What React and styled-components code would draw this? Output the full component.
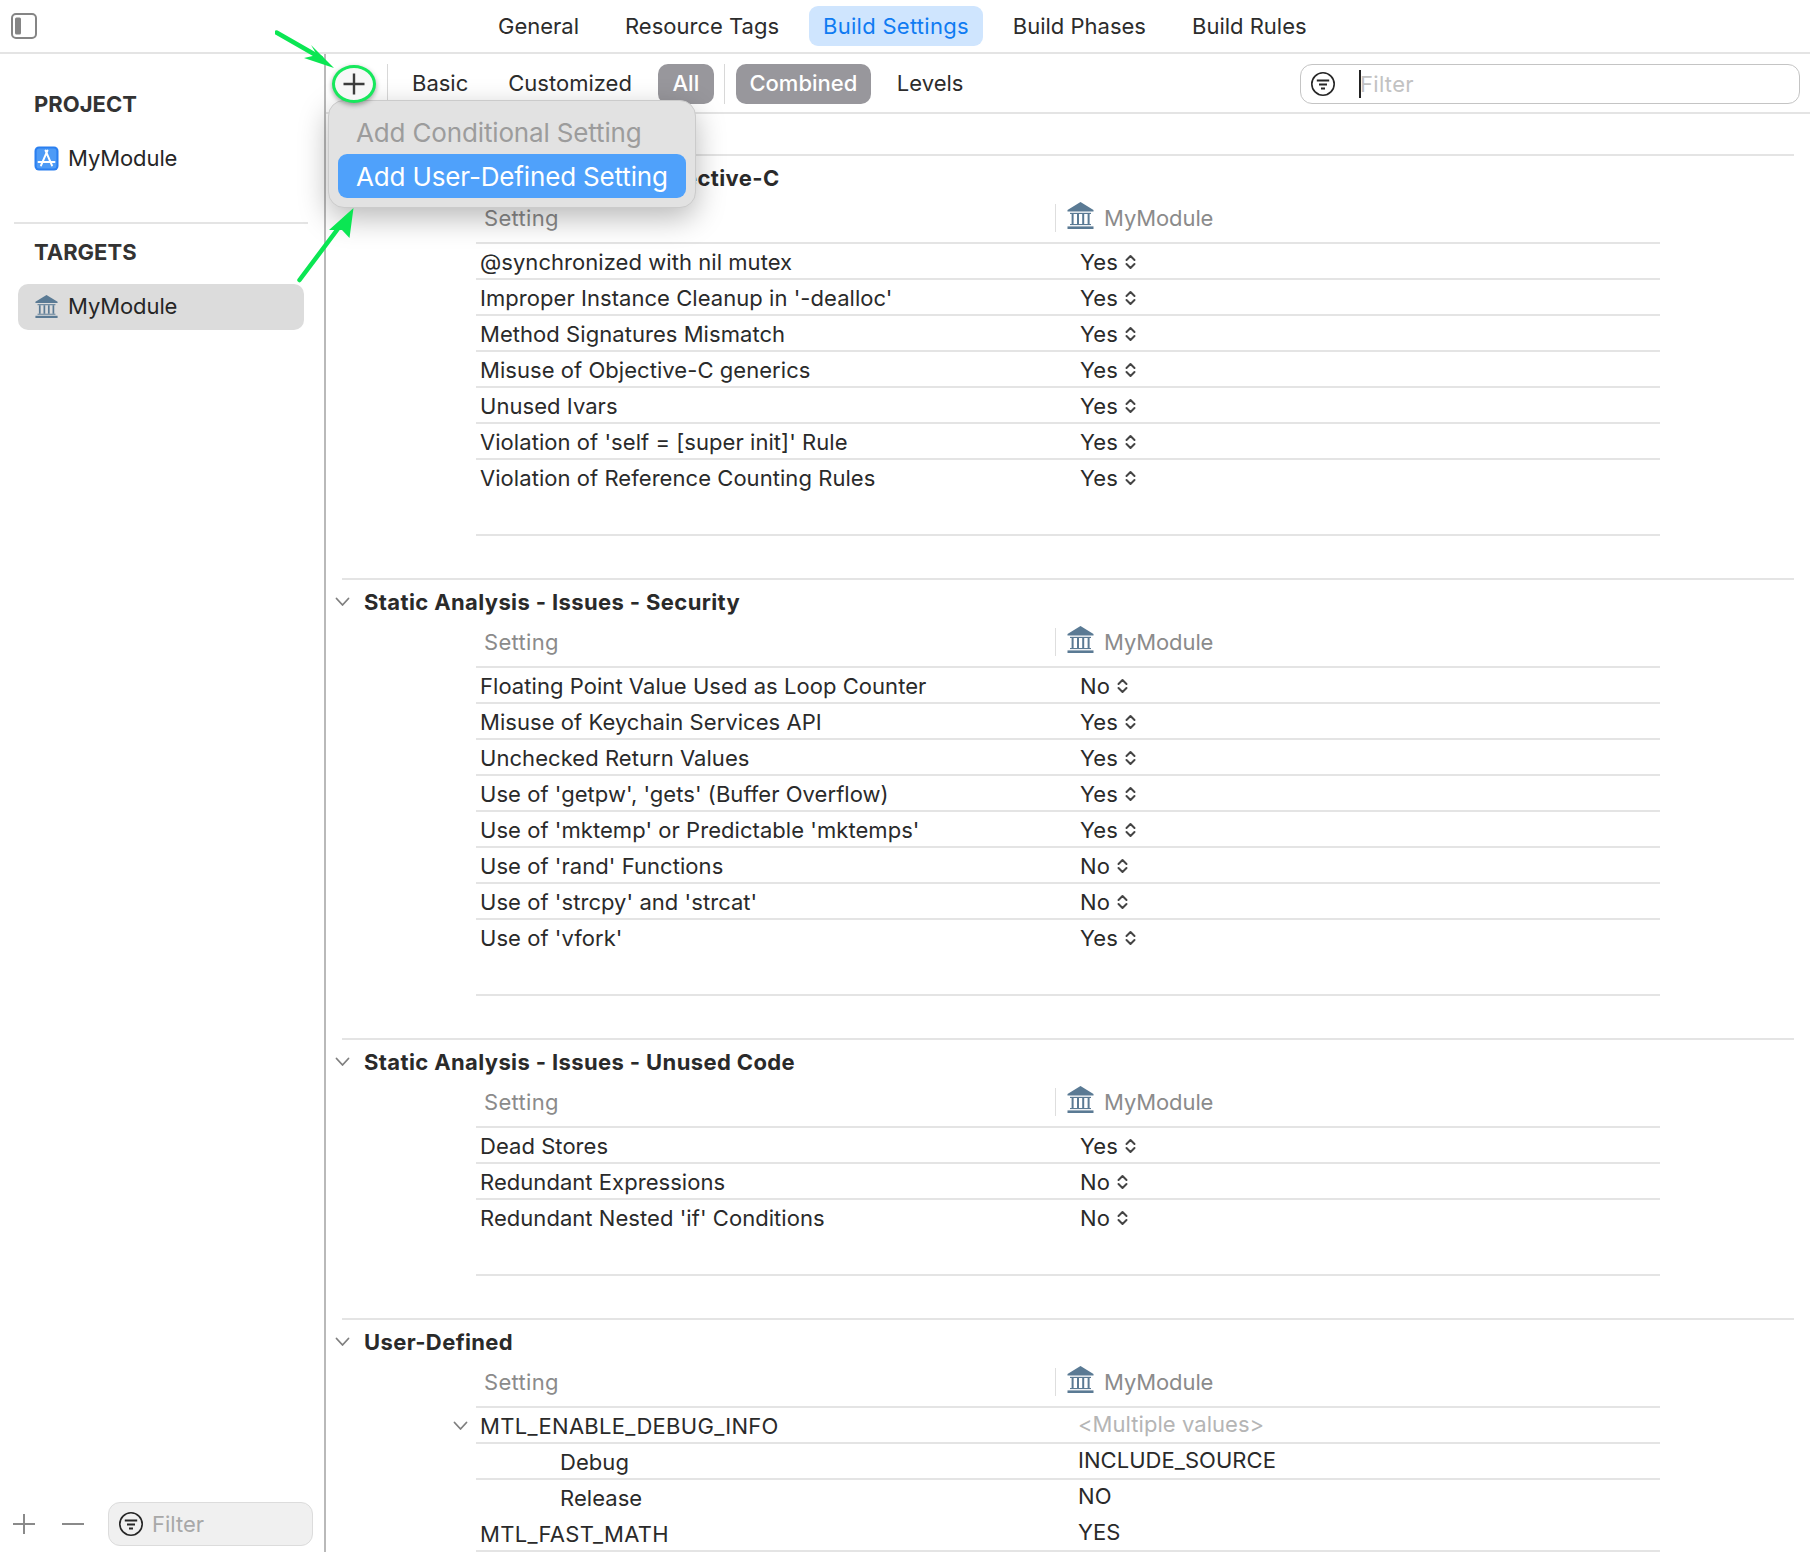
import React from 'react'
import styled, { createGlobalStyle } from 'styled-components'

const GlobalStyle = createGlobalStyle`
  html, body {
    margin: 0;
    background: #fff;
  }
  body {
    font-family: "Inter", "Liberation Sans", sans-serif;
    color: #262626;
  }
`

const sections = [
  {
    title: 'Static Analysis - Issues - Objective-C',
    rows: [
      ['@synchronized with nil mutex', 'Yes'],
      ["Improper Instance Cleanup in '-dealloc'", 'Yes'],
      ['Method Signatures Mismatch', 'Yes'],
      ['Misuse of Objective-C generics', 'Yes'],
      ['Unused Ivars', 'Yes'],
      ["Violation of 'self = [super init]' Rule", 'Yes'],
      ['Violation of Reference Counting Rules', 'Yes'],
    ],
  },
  {
    title: 'Static Analysis - Issues - Security',
    rows: [
      ['Floating Point Value Used as Loop Counter', 'No'],
      ['Misuse of Keychain Services API', 'Yes'],
      ['Unchecked Return Values', 'Yes'],
      ["Use of 'getpw', 'gets' (Buffer Overflow)", 'Yes'],
      ["Use of 'mktemp' or Predictable 'mktemps'", 'Yes'],
      ["Use of 'rand' Functions", 'No'],
      ["Use of 'strcpy' and 'strcat'", 'No'],
      ["Use of 'vfork'", 'Yes'],
    ],
  },
  {
    title: 'Static Analysis - Issues - Unused Code',
    rows: [
      ['Dead Stores', 'Yes'],
      ['Redundant Expressions', 'No'],
      ["Redundant Nested 'if' Conditions", 'No'],
    ],
  },
]

function BankIcon({ size = 27 }) {
  return (
    <svg width={size} height={size} viewBox="0 0 27 27" fill="#5a7a94">
      <path d="M13.5 0 L26.5 8 L26.5 9.5 L0.5 9.5 L0.5 8 Z" />
      <rect x="3" y="10.8" width="21" height="1.2" />
      <rect x="4.6" y="12" width="2" height="10" />
      <rect x="10" y="12" width="2" height="10" />
      <rect x="15.2" y="12" width="2" height="10" />
      <rect x="20.6" y="12" width="2" height="10" />
      <rect x="3" y="22" width="21" height="1.1" />
      <rect x="0.5" y="24.4" width="26" height="2.6" />
    </svg>
  )
}

function AppIcon() {
  return (
    <svg width="25" height="25" viewBox="0 0 25 25">
      <rect x="0.5" y="0.5" width="24" height="24" rx="4.5" fill="#2a7ff0" />
      <rect x="2.6" y="2.6" width="19.8" height="19.8" rx="2.5" fill="#4e9bf6" />
      <path d="M13.5 4.5 L7 19.5 M11.5 4.5 L18 19.5 M4.5 16h16" stroke="#fff" strokeWidth="1.9" fill="none" strokeLinecap="round" />
    </svg>
  )
}

function FilterIcon({ size = 26 }) {
  return (
    <svg width={size} height={size} viewBox="0 0 26 26" fill="none" stroke="#262626">
      <circle cx="13" cy="13" r="11.2" strokeWidth="1.6" />
      <path d="M6.8 9.5h12.4M9 13.5h8M11 17.5h4" strokeWidth="2" />
    </svg>
  )
}

function Stepper() {
  return (
    <svg width="11" height="16" viewBox="0 0 11 16" fill="none" stroke="#444" strokeWidth="2" strokeLinecap="round" strokeLinejoin="round">
      <path d="M1.5 6 L5.5 2 L9.5 6" />
      <path d="M1.5 10 L5.5 14 L9.5 10" />
    </svg>
  )
}

function Chevron() {
  return (
    <svg width="15" height="10" viewBox="0 0 15 10" fill="none" stroke="#7f7f7f" strokeWidth="1.8" strokeLinecap="round" strokeLinejoin="round">
      <path d="M1.5 1.5 L7.5 8 L13.5 1.5" />
    </svg>
  )
}

function SectionBlock({ title, children }) {
  return (
    <Section>
      <SectionTitle>
        <ChevronSlot><Chevron /></ChevronSlot>
        <span>{title}</span>
      </SectionTitle>
      <HeaderRow>
        <SettingCol>Setting</SettingCol>
        <TargetCol>
          <HeaderIcon><BankIcon /></HeaderIcon>
          <span>MyModule</span>
        </TargetCol>
      </HeaderRow>
      {children}
    </Section>
  )
}

export default function App() {
  return (
    <Page>
      <GlobalStyle />
      <TopBar>
        <SidebarToggle>
          <svg width="26" height="26" viewBox="0 0 26 26">
            <rect x="1" y="1" width="24" height="24" rx="4" fill="#fff" stroke="#858585" strokeWidth="2" />
            <rect x="4" y="4.5" width="6" height="17" rx="1.5" fill="#858585" />
          </svg>
        </SidebarToggle>
        <Tabs>
          <Tab>General</Tab>
          <Tab>Resource Tags</Tab>
          <Tab $active>Build Settings</Tab>
          <Tab>Build Phases</Tab>
          <Tab>Build Rules</Tab>
        </Tabs>
      </TopBar>

      <Body>
        <Sidebar>
          <SideGroup>
            <SideHeading $pt={37}>PROJECT</SideHeading>
            <SideItem>
              <IconSlot><AppIcon /></IconSlot>
              <span>MyModule</span>
            </SideItem>
          </SideGroup>
          <SideRule />
          <SideHeading $pt={15}>TARGETS</SideHeading>
          <SideItem $selected>
            <IconSlot><BankIcon size={23} /></IconSlot>
            <span>MyModule</span>
          </SideItem>
          <SideFooter>
            <FootButton>
              <svg width="24" height="24" viewBox="0 0 24 24" stroke="#8a8a8a" strokeWidth="2">
                <path d="M12 2v20M1 12h22" />
              </svg>
            </FootButton>
            <FootButton>
              <svg width="24" height="24" viewBox="0 0 24 24" stroke="#8a8a8a" strokeWidth="2">
                <path d="M1 12h22" />
              </svg>
            </FootButton>
            <SideFilter>
              <FilterIcon />
              <span>Filter</span>
            </SideFilter>
          </SideFooter>
        </Sidebar>

        <Main>
          <Toolbar>
            <AddButton>
              <svg width="24" height="24" viewBox="0 0 24 24" stroke="#3c3c3c" strokeWidth="2.4">
                <path d="M12 1.5v21M1.5 12h21" />
              </svg>
            </AddButton>
            <ToolDivider />
            <ToolItem $ml={24}>Basic</ToolItem>
            <ToolItem $ml={40}>Customized</ToolItem>
            <Pill $ml={26} $w={56}>All</Pill>
            <ToolDivider $ml={10} />
            <Pill $ml={11} $w={135}>Combined</Pill>
            <ToolItem $ml={26}>Levels</ToolItem>
            <SearchBox>
              <FilterIcon />
              <Caret />
              <span>Filter</span>
            </SearchBox>
          </Toolbar>

          <Scroller>
            {sections.map((s) => (
              <SectionBlock key={s.title} title={s.title}>
                {s.rows.map(([name, value]) => (
                  <Row key={name}>
                    <Name>{name}</Name>
                    <Value>
                      {value}
                      <Stepper />
                    </Value>
                  </Row>
                ))}
                <TableEnd />
              </SectionBlock>
            ))}
            <SectionBlock title="User-Defined">
              <Row>
                <NestChevron><Chevron /></NestChevron>
                <Name $caps>MTL_ENABLE_DEBUG_INFO</Name>
                <PlainValue $muted>&lt;Multiple values&gt;</PlainValue>
              </Row>
              <Row>
                <Name $indent>Debug</Name>
                <PlainValue>INCLUDE_SOURCE</PlainValue>
              </Row>
              <Row>
                <Name $indent>Release</Name>
                <PlainValue>NO</PlainValue>
              </Row>
              <Row>
                <Name $caps>MTL_FAST_MATH</Name>
                <PlainValue>YES</PlainValue>
              </Row>
            </SectionBlock>
          </Scroller>

          <Menu>
            <MenuItem $disabled>Add Conditional Setting</MenuItem>
            <MenuItem>Add User-Defined Setting</MenuItem>
          </Menu>
        </Main>
      </Body>

      <Arrows width="100" height="290" viewBox="0 0 100 290">
        <path d="M1.5 32.5 L46 58" stroke="#0be653" strokeWidth="4.5" strokeLinecap="round" />
        <path d="M59 68 L29 58 L42 55 L36 45 Z" fill="#0be653" />
        <path d="M24.5 280 L65 226" stroke="#0be653" strokeWidth="4.5" strokeLinecap="round" />
        <path d="M78.5 208 L74.5 238 L67 230 L54 230 Z" fill="#0be653" />
      </Arrows>
    </Page>
  )
}

const Page = styled.div`
  position: relative;
  width: 1810px;
  height: 1552px;
  overflow: hidden;
  background: #fff;
  display: flex;
  flex-direction: column;
`
const TopBar = styled.div`
  height: 52px;
  flex: none;
  display: flex;
  align-items: center;
  border-bottom: 2px solid #e4e4e4;
  padding-left: 11px;
`
const SidebarToggle = styled.div`
  width: 26px;
  height: 26px;
  display: flex;
`
const Tabs = styled.div`
  display: flex;
  align-items: center;
  margin-left: 461px;
`
const Tab = styled.div`
  height: 40px;
  box-sizing: border-box;
  padding-bottom: 1px;
  display: flex;
  align-items: center;
  font-size: 22px;
  letter-spacing: ${(p) => (p.$active ? 0.27 : 0)}px;
  padding-left: ${(p) => (p.$active ? 14 : 0)}px;
  padding-right: ${(p) => (p.$active ? 14 : 0)}px;
  margin-right: ${(p) => (p.$active ? 30 : 46)}px;
  margin-left: ${(p) => (p.$active ? -16 : 0)}px;
  border-radius: 9px;
  color: ${(p) => (p.$active ? '#0f7bf2' : '#2c2c2c')};
  background: ${(p) => (p.$active ? '#cfe5fe' : 'transparent')};
`
const Body = styled.div`
  flex: 1;
  display: flex;
  min-height: 0;
`
const Sidebar = styled.div`
  width: 324px;
  flex: none;
  border-right: 2px solid #b9b9b9;
  display: flex;
  flex-direction: column;
`
const SideGroup = styled.div`
  height: 168px;
  flex: none;
`
const SideHeading = styled.div`
  font-size: 22px;
  font-weight: 700;
  color: #333;
  padding: ${(p) => p.$pt}px 0 0 34px;
  line-height: 26px;
`
const SideItem = styled.div`
  height: 46px;
  margin: ${(p) => (p.$selected ? '19px 0 0 18px' : '18px 0 0 18px')};
  width: 286px;
  padding-left: 16px;
  padding-bottom: ${(p) => (p.$selected ? 2 : 0)}px;
  box-sizing: border-box;
  display: flex;
  align-items: center;
  gap: 9px;
  font-size: 22px;
  letter-spacing: -0.1px;
  border-radius: 10px;
  background: ${(p) => (p.$selected ? '#dcdcdc' : 'transparent')};
`
const IconSlot = styled.div`
  width: 25px;
  display: flex;
  justify-content: center;
`
const SideRule = styled.div`
  height: 2px;
  margin: 0 16px 0 14px;
  background: #e4e4e4;
  flex: none;
`
const SideFooter = styled.div`
  margin-top: auto;
  height: 44px;
  margin-bottom: 6px;
  padding-left: 12px;
  display: flex;
  align-items: center;
`
const FootButton = styled.div`
  width: 24px;
  height: 24px;
  margin-right: 25px;
  display: flex;
`
const SideFilter = styled.div`
  width: 205px;
  height: 44px;
  box-sizing: border-box;
  margin-left: -2px;
  padding-left: 9px;
  display: flex;
  align-items: center;
  gap: 8px;
  background: #f0f0f0;
  border: 1px solid #dcdcdc;
  border-radius: 12px;
  font-size: 22px;
  color: #a8a8a8;
`
const Main = styled.div`
  flex: 1;
  min-width: 0;
  position: relative;
  display: flex;
  flex-direction: column;
`
const Toolbar = styled.div`
  height: 60px;
  flex: none;
  box-sizing: border-box;
  padding-top: 2px;
  display: flex;
  align-items: center;
  border-bottom: 2px solid #e4e4e4;
`
const AddButton = styled.div`
  width: 44px;
  height: 38px;
  margin-left: 6px;
  box-sizing: border-box;
  border: 3px solid #17e85c;
  border-radius: 50%;
  display: flex;
  align-items: center;
  justify-content: center;
  box-shadow: 0 2px 5px rgba(0, 0, 0, 0.35);
  position: relative;
  z-index: 3;
  background: #f7f7f7;
`
const ToolDivider = styled.div`
  width: 1px;
  height: 40px;
  background: #d8d8d8;
  margin-left: ${(p) => p.$ml ?? 11}px;
`
const ToolItem = styled.div`
  font-size: 22px;
  color: #2c2c2c;
  padding-bottom: 2px;
  margin-left: ${(p) => p.$ml}px;
`
const Pill = styled.div`
  height: 40px;
  box-sizing: border-box;
  padding-bottom: 2px;
  width: ${(p) => p.$w}px;
  margin-left: ${(p) => p.$ml}px;
  border-radius: 10px;
  background: #98979c;
  color: #fff;
  display: flex;
  align-items: center;
  justify-content: center;
  font-size: 22px;
  font-weight: 500;
`
const SearchBox = styled.div`
  margin-left: auto;
  margin-right: 10px;
  width: 500px;
  height: 40px;
  box-sizing: border-box;
  border: 1.5px solid #c4c4c4;
  border-radius: 12px;
  padding-left: 9px;
  display: flex;
  align-items: center;
  font-size: 22px;
  letter-spacing: 0.3px;
  color: #c2c2c2;
`
const Caret = styled.div`
  width: 2px;
  height: 28px;
  background: #222;
  margin: 0 -1px 0 23px;
`
const Scroller = styled.div`
  flex: 1;
  min-height: 0;
  overflow: hidden;
  padding: 40px 16px 0 16px;
`
const Section = styled.div`
  border-top: 2px solid #e4e4e4;
  padding-bottom: 42px;
`
const SectionTitle = styled.div`
  height: 43px;
  display: flex;
  align-items: center;
  font-size: 22px;
  font-weight: 700;
  letter-spacing: 0.38px;
  color: #2a2a2a;
  margin-left: -7px;
`
const ChevronSlot = styled.div`
  width: 29px;
  display: flex;
`
const HeaderRow = styled.div`
  height: 37px;
  padding-bottom: 6px;
  margin: 0 134px;
  display: flex;
  align-items: center;
  border-bottom: 2px solid #e4e4e4;
  font-size: 22px;
  letter-spacing: -0.1px;
  color: #8b8b8b;
`
const SettingCol = styled.div`
  width: 579px;
  padding-left: 8px;
  box-sizing: border-box;
  letter-spacing: 0.3px;
`
const TargetCol = styled.div`
  height: 28px;
  padding-left: 11px;
  border-left: 1px solid #dedede;
  display: flex;
  align-items: center;
  gap: 10px;
`
const HeaderIcon = styled.div`
  display: flex;
  margin-top: -5px;
`
const Row = styled.div`
  position: relative;
  height: 36px;
  box-sizing: border-box;
  padding-top: 1px;
  margin: 0 134px;
  display: flex;
  align-items: center;
  font-size: 22px;
  letter-spacing: 0.05px;
  color: #2a2a2a;
  border-bottom: 2px solid #e4e4e4;

  &:nth-last-child(2) {
    border-bottom-color: transparent;
  }
`
const Name = styled.div`
  width: 604px;
  flex: none;
  box-sizing: border-box;
  padding-left: ${(p) => (p.$indent ? 84 : 4)}px;
  letter-spacing: ${(p) => (p.$caps ? 0.3 : 0.05)}px;
`
const Value = styled.div`
  display: flex;
  align-items: center;
  gap: 7px;
`
const PlainValue = styled.div`
  margin-left: -2px;
  margin-top: -4px;
  color: ${(p) => (p.$muted ? '#b5b5b5' : '#2a2a2a')};
`
const NestChevron = styled.div`
  position: absolute;
  left: -23px;
  top: 13px;
  display: flex;
`
const TableEnd = styled.div`
  height: 2px;
  margin: 38px 134px 0;
  background: #e4e4e4;
`
const Menu = styled.div`
  position: absolute;
  left: 2px;
  top: 46px;
  width: 368px;
  height: 108px;
  box-sizing: border-box;
  padding: 9px 9px 9px;
  border-radius: 16px;
  background: #e2e2e2;
  border: 1px solid #cbcbcb;
  box-shadow: 0 10px 30px rgba(0, 0, 0, 0.28);
  z-index: 2;
`
const MenuItem = styled.div`
  height: 44px;
  border-radius: 9px;
  padding-left: 18px;
  display: flex;
  align-items: center;
  font-size: 26px;
  letter-spacing: -0.15px;
  color: ${(p) => (p.$disabled ? '#9c9c9c' : '#fff')};
  background: ${(p) => (p.$disabled ? 'transparent' : '#4fa1fb')};
`
const Arrows = styled.svg`
  position: absolute;
  left: 275px;
  top: 0;
  z-index: 4;
`
